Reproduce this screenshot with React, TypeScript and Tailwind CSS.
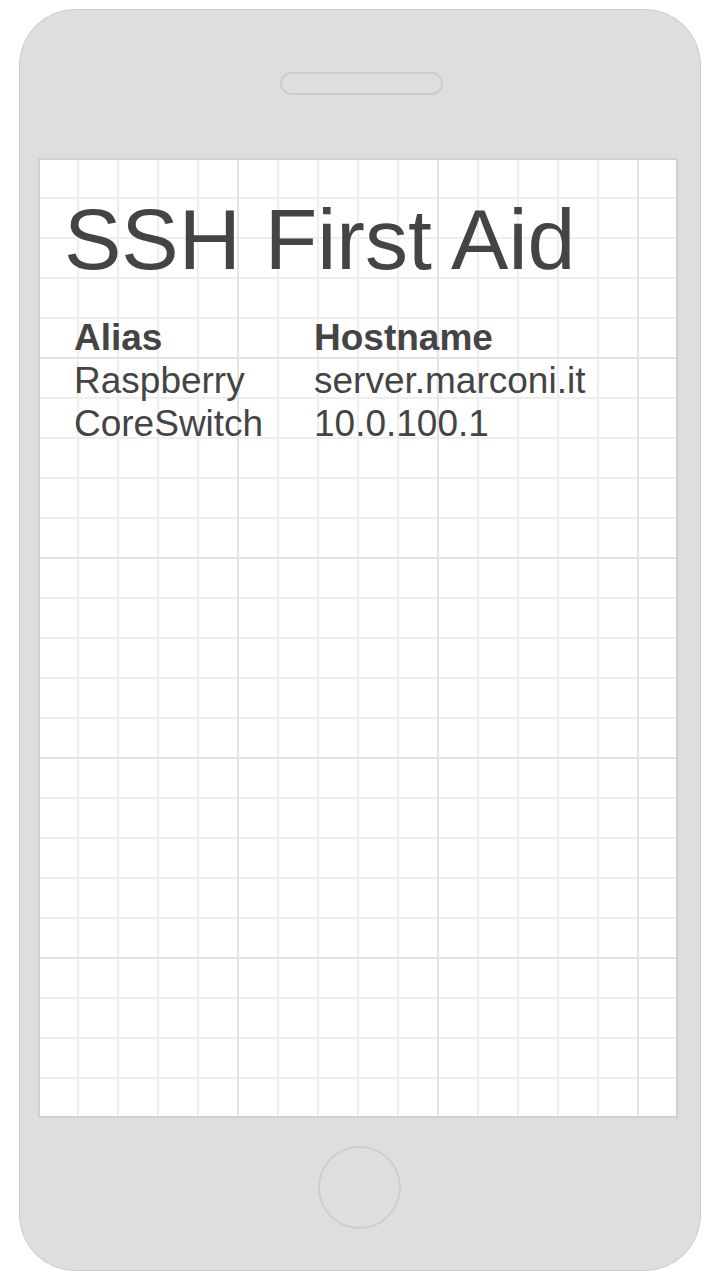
import React from "react";

export default function App() {
  const rows = [
    { alias: "Raspberry", host: "server.marconi.it" },
    { alias: "CoreSwitch", host: "10.0.100.1" },
  ];
  return (
    <div className="w-[714px] h-[1282px] bg-white pl-[19px] pt-[9px] font-['Liberation_Sans',Arial,sans-serif]">
      <div className="w-[682px] h-[1262px] rounded-[56px] border border-[#cbcbcb] bg-[#dedede] flex flex-col">
        <div className="mt-[62px] ml-[260px] w-[163px] h-[23px] rounded-full border-2 border-[#cdcdcd]" />
        <div className="mt-[63px] ml-[18px] w-[640px] h-[960px] border-2 border-[#d0d0d0] bg-white [background-image:linear-gradient(to_right,transparent_198px,#e3e3e3_198px),linear-gradient(to_bottom,transparent_198px,#e3e3e3_198px),linear-gradient(to_right,transparent_38px,#eeeeee_38px),linear-gradient(to_bottom,transparent_38px,#eeeeee_38px)] [background-size:200px_200px,200px_200px,40px_40px,40px_40px] [background-position:-1px_-1px]">
          <div className="mt-[36px] pl-[24px] text-[86px] leading-[86px] text-[#444444] whitespace-nowrap">
            SSH First Aid
          </div>
          <div className="mt-[34px] pl-[34px] text-[37px] leading-[43px] text-[#444444]">
            <div className="flex font-bold">
              <div className="w-[240px]">Alias</div>
              <div>Hostname</div>
            </div>
            {rows.map((r) => (
              <div key={r.alias} className="flex">
                <div className="w-[240px]">{r.alias}</div>
                <div>{r.host}</div>
              </div>
            ))}
          </div>
        </div>
        <div className="mt-[28px] ml-[298px] w-[83px] h-[83px] rounded-full border-2 border-[#cdcdcd]" />
      </div>
    </div>
  );
}
